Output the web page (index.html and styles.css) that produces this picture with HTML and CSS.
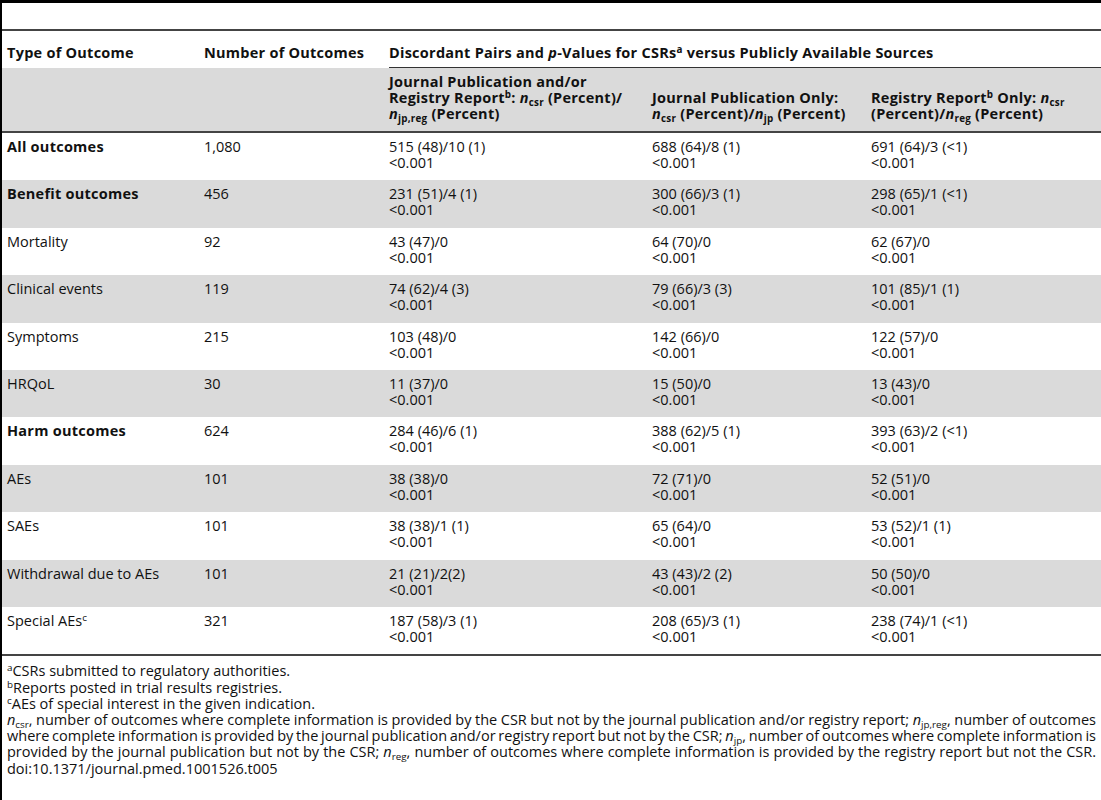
FILE: index.html
```html
<!DOCTYPE html>
<html lang="en">
<head>
  <meta charset="UTF-8">
  <meta name="viewport" content="width=device-width, initial-scale=1.0">
  <title>Table 5. Discordant pairs for CSRs versus publicly available sources</title>
  <link rel="stylesheet" href="styles.css">
</head>
<body>
  <div class="page">
    <div class="caption-space"></div>

    <!-- Table -->
    <table class="data-table">
      <colgroup>
        <col class="c1">
        <col class="c2">
        <col class="c3">
        <col class="c4">
        <col class="c5">
      </colgroup>
      <thead>
        <tr class="head-top">
          <th>Type of Outcome</th>
          <th>Number of Outcomes</th>
          <th colspan="3" class="span-head"><div>Discordant Pairs and <i>p</i>-Values for CSRs<sup>a</sup> versus Publicly Available Sources</div></th>
        </tr>
        <tr class="head-sub">
          <th></th>
          <th></th>
          <th>Journal Publication and/or<br>Registry Report<sup>b</sup>: <i>n</i><sub>csr</sub> (Percent)/<br><i>n</i><sub>jp,reg</sub> (Percent)</th>
          <th>Journal Publication Only:<br><i>n</i><sub>csr</sub> (Percent)/<i>n</i><sub>jp</sub> (Percent)</th>
          <th>Registry Report<sup>b</sup> Only: <i>n</i><sub>csr</sub><br>(Percent)/<i>n</i><sub>reg</sub> (Percent)</th>
        </tr>
      </thead>
      <tbody>
        <tr>
          <td class="strong">All outcomes</td>
          <td>1,080</td>
          <td>515 (48)/10 (1)<br>&lt;0.001</td>
          <td>688 (64)/8 (1)<br>&lt;0.001</td>
          <td>691 (64)/3 (&lt;1)<br>&lt;0.001</td>
        </tr>
        <tr>
          <td class="strong">Benefit outcomes</td>
          <td>456</td>
          <td>231 (51)/4 (1)<br>&lt;0.001</td>
          <td>300 (66)/3 (1)<br>&lt;0.001</td>
          <td>298 (65)/1 (&lt;1)<br>&lt;0.001</td>
        </tr>
        <tr>
          <td>Mortality</td>
          <td>92</td>
          <td>43 (47)/0<br>&lt;0.001</td>
          <td>64 (70)/0<br>&lt;0.001</td>
          <td>62 (67)/0<br>&lt;0.001</td>
        </tr>
        <tr>
          <td>Clinical events</td>
          <td>119</td>
          <td>74 (62)/4 (3)<br>&lt;0.001</td>
          <td>79 (66)/3 (3)<br>&lt;0.001</td>
          <td>101 (85)/1 (1)<br>&lt;0.001</td>
        </tr>
        <tr>
          <td>Symptoms</td>
          <td>215</td>
          <td>103 (48)/0<br>&lt;0.001</td>
          <td>142 (66)/0<br>&lt;0.001</td>
          <td>122 (57)/0<br>&lt;0.001</td>
        </tr>
        <tr>
          <td>HRQoL</td>
          <td>30</td>
          <td>11 (37)/0<br>&lt;0.001</td>
          <td>15 (50)/0<br>&lt;0.001</td>
          <td>13 (43)/0<br>&lt;0.001</td>
        </tr>
        <tr>
          <td class="strong">Harm outcomes</td>
          <td>624</td>
          <td>284 (46)/6 (1)<br>&lt;0.001</td>
          <td>388 (62)/5 (1)<br>&lt;0.001</td>
          <td>393 (63)/2 (&lt;1)<br>&lt;0.001</td>
        </tr>
        <tr>
          <td>AEs</td>
          <td>101</td>
          <td>38 (38)/0<br>&lt;0.001</td>
          <td>72 (71)/0<br>&lt;0.001</td>
          <td>52 (51)/0<br>&lt;0.001</td>
        </tr>
        <tr>
          <td>SAEs</td>
          <td>101</td>
          <td>38 (38)/1 (1)<br>&lt;0.001</td>
          <td>65 (64)/0<br>&lt;0.001</td>
          <td>53 (52)/1 (1)<br>&lt;0.001</td>
        </tr>
        <tr>
          <td>Withdrawal due to AEs</td>
          <td>101</td>
          <td>21 (21)/2(2)<br>&lt;0.001</td>
          <td>43 (43)/2 (2)<br>&lt;0.001</td>
          <td>50 (50)/0<br>&lt;0.001</td>
        </tr>
        <tr>
          <td>Special AEs<sup>c</sup></td>
          <td>321</td>
          <td>187 (58)/3 (1)<br>&lt;0.001</td>
          <td>208 (65)/3 (1)<br>&lt;0.001</td>
          <td>238 (74)/1 (&lt;1)<br>&lt;0.001</td>
        </tr>
      </tbody>
    </table>

    <!-- Footnotes -->
    <div class="notes">
      <p><sup>a</sup>CSRs submitted to regulatory authorities.</p>
      <p><sup>b</sup>Reports posted in trial results registries.</p>
      <p><sup>c</sup>AEs of special interest in the given indication.</p>
      <p class="justified">
        <span><i>n</i><sub>csr</sub>, number of outcomes where complete information is provided by the CSR but not by the journal publication and/or registry report; <i>n</i><sub>jp,reg</sub>, number of outcomes</span>
        <span>where complete information is provided by the journal publication and/or registry report but not by the CSR; <i>n</i><sub>jp</sub>, number of outcomes where complete information is</span>
        <span>provided by the journal publication but not by the CSR; <i>n</i><sub>reg</sub>, number of outcomes where complete information is provided by the registry report but not the CSR.</span>
      </p>
      <p>doi:10.1371/journal.pmed.1001526.t005</p>
    </div>
  </div>
</body>
</html>
```

FILE: styles.css
```css
* {
  margin: 0;
  padding: 0;
  box-sizing: border-box;
}

body {
  font-family: "Open Sans", "Noto Sans", sans-serif;
  font-size: 14.5px;
  line-height: 16px;
  color: #111;
  background-color: #fff;
}

.page {
  min-height: 800px;
  border-top: 3px solid #000;
  border-left: 2px solid #000;
}

.caption-space {
  height: 26px;
}

sup {
  font-size: 68%;
  line-height: 0;
  vertical-align: 0.5em;
}

sub {
  font-size: 68%;
  line-height: 0;
  vertical-align: -0.3em;
}

/* Table */
.data-table {
  width: 100%;
  table-layout: fixed;
  border-collapse: collapse;
  border-top: 2px solid #444;
  border-bottom: 2px solid #444;
}

.c1 { width: 197px; }
.c2 { width: 185px; }
.c3 { width: 263px; }
.c4 { width: 219px; }

.data-table th,
.data-table td {
  text-align: left;
  vertical-align: top;
  padding: 6px 5px 9.4px 5px;
}

.data-table th {
  font-weight: bold;
  white-space: nowrap;
  letter-spacing: 0.25px;
}

.head-top th {
  padding: 14px 5px 7px 5px;
}

.head-top th.span-head {
  padding: 0 0 0 5px;
}

.span-head div {
  padding: 14px 5px 6px 0;
  border-bottom: 1px solid #333;
}

.head-sub th {
  background-color: #dadada;
  vertical-align: bottom;
  padding: 6px 5px 9px 5px;
  border-bottom: 2px solid #444;
}

.data-table tbody tr:nth-child(even) td {
  background-color: #dadada;
}

.data-table td.strong {
  font-weight: bold;
  letter-spacing: 0.25px;
}

/* Footnotes */
.notes {
  padding: 7px 5px 0 5px;
}

.notes p {
  line-height: 16.2px;
}

.notes .justified span {
  display: block;
  text-align: justify;
  text-align-last: justify;
  white-space: nowrap;
  word-spacing: -2px;
}
```
